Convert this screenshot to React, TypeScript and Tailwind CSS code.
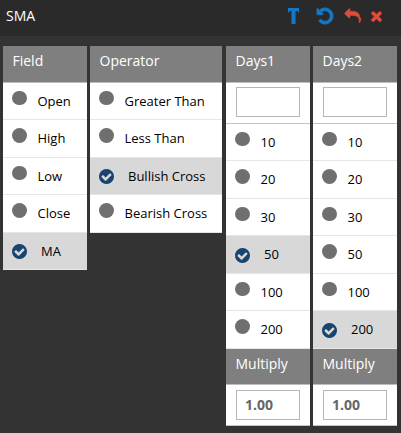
import React from "react";

const CHECK =
  "M1412 734q0-28-18-46l-91-90q-19-19-45-19t-45 19l-408 407-226-226q-19-19-45-19t-45 19l-91 90q-18 18-18 46 0 27 18 45l362 362q19 19 45 19 27 0 46-19l543-543q18-18 18-45zm252 162q0 209-103 385.5t-279.5 279.5-385.5 103-385.5-103-279.5-279.5-103-385.5 103-385.5 279.5-279.5 385.5-103 385.5 103 279.5 279.5 103 385.5z";
const UNDO =
  "M1664 896q0 156-61 298t-164 245-245 164-298 61q-172 0-327-72.5t-264-204.5q-7-10-6.5-22.5t8.5-20.5l137-138q10-9 25-9 16 2 23 12 73 95 179 147t225 52q104 0 198.5-40.5t163.5-109.5 109.5-163.5 40.500-198.500-40.500-198.500-109.500-163.500-163.500-109.500-198.500-40.500q-98 0-188 35.500t-160 101.500l137 138q31 30 14 69-17 40-59 40h-448q-26 0-45-19t-19-45v-448q0-42 40-59 39-17 69 14l130 129q107-101 244.500-156.500t284.500-55.500q156 0 298 61t245 164 164 245 61 298z";
const REPLY =
  "M1792 1120q0 166-127 451-3 7-10.5 24t-13.5 30-13 22q-12 17-28 17-15 0-23.5-10t-8.5-25q0-9 2.5-26.5t2.5-23.5q5-68 5-123 0-124-21.5-222t-59.5-169.5-98-123.5-130-84.5-164.5-50.5-192-24.5-217.5-7.5h-224v256q0 26-19 45t-45 19-45-19l-512-512q-19-19-19-45t19-45l512-512q19-19 45-19t45 19 19 45v256h224q713 0 875 403 53 134 53 333z";
const TIMES =
  "M1490 1322q0 40-28 68l-136 136q-28 28-68 28t-68-28l-294-294-294 294q-28 28-68 28t-68-28l-136-136q-28-28-28-68t28-68l294-294-294-294q-28-28-28-68t28-68l136-136q28-28 68-28t68 28l294 294 294-294q28-28 68-28t68 28l136 136q28 28 28 68t-28 68l-294 294 294 294q28 28 28 68z";

function Icon({
  d,
  className,
  box = "0 0 1792 1792",
  weight = 0,
}: {
  d: string;
  className: string;
  box?: string;
  weight?: number;
}) {
  return (
    <svg viewBox={box} className={`shrink-0 ${className}`} fill="currentColor" stroke="currentColor" strokeWidth={weight}>
      <path d={d} />
    </svg>
  );
}

function Header({ label }: { label: string }) {
  return (
    <div className="h-[36.5px] border-b border-[#bdbdbd] bg-[#7f7f7f] pl-[9.5px] pt-[4px] text-[14px] leading-[22px] text-white">
      {label}
    </div>
  );
}

function Option({ label, selected }: { label: string; selected: boolean }) {
  return (
    <div
      className={`flex h-[37.5px] items-start border-b border-[#e6e6e6] pl-[9px] text-[13px] leading-5 text-black ${
        selected ? "bg-[#d8d8d8]" : "bg-white"
      }`}
    >
      {selected ? (
        <Icon d={CHECK} box="128 128 1536 1536" className="mt-[11.5px] size-[15px] text-[#1a4470]" />
      ) : (
        <span className="mt-[8px] h-[14.5px] w-[15px] shrink-0 rounded-full bg-[#6f6f6f]" />
      )}
      <span className={`mt-[8.4px] whitespace-nowrap ${selected ? "ml-[14px]" : "ml-[10.5px]"}`}>{label}</span>
    </div>
  );
}

function Options({ items, selected }: { items: string[]; selected: string }) {
  return (
    <>
      {items.map((item) => (
        <Option key={item} label={item} selected={item === selected} />
      ))}
    </>
  );
}

function Field({ value = "" }: { value?: string }) {
  return (
    <div className="h-[41px] border-b border-[#c4c4c4] bg-white px-[10px] pt-[4.6px]">
      <input
        readOnly
        value={value}
        className="block h-[30px] w-16 border border-[#b9b5b5] bg-white pb-px pl-2 text-[14px] font-bold text-[#666] outline-none"
      />
    </div>
  );
}

const DAYS = ["10", "20", "30", "50", "100", "200"];

function Days({ title, selected }: { title: string; selected: string }) {
  return (
    <div className="w-[84px]">
      <Header label={title} />
      <Field />
      <Options items={DAYS} selected={selected} />
      <Header label="Multiply" />
      <Field value="1.00" />
    </div>
  );
}

export default function App() {
  return (
    <div className="h-[433px] w-[401px] overflow-hidden bg-[#333] font-['Open_Sans','Noto_Sans',sans-serif]">
      <div className="flex h-9 items-center bg-[#2a2a2a] pb-1 pl-[6px] text-[14px] text-white">
        <span className="w-[282px] pb-0.5">SMA</span>
        <Icon d="M0 0H11V4.500H10.300L9.500 3H7.500V16H3.500V3H1.500L0.700 4.500H0Z" box="0 0 11 16" className="h-4 w-[11px] text-[#1478c8]" />
        <Icon d={UNDO} box="128 128 1536 1536" weight={90} className="ml-[18px] size-4 overflow-visible text-[#1478c8]" />
        <Icon d={REPLY} box="0 128 1792 1536" weight={60} className="ml-[13px] h-[13px] w-[15px] overflow-visible text-[#dd4b39]" />
        <Icon d={TIMES} box="302 238 1188 1316" className="ml-[10px] h-3 w-[11px] text-[#dd4b39]" />
      </div>
      <div className="flex items-start pl-[3px] pt-[10px]">
        <div className="w-[84px]">
          <Header label="Field" />
          <Options items={["Open", "High", "Low", "Close", "MA"]} selected="MA" />
        </div>
        <div className="ml-[3px] w-[132px]">
          <Header label="Operator" />
          <Options items={["Greater Than", "Less Than", "Bullish Cross", "Bearish Cross"]} selected="Bullish Cross" />
        </div>
        <div className="ml-1 flex gap-[3px]">
          <Days title="Days1" selected="50" />
          <Days title="Days2" selected="200" />
        </div>
      </div>
    </div>
  );
}
